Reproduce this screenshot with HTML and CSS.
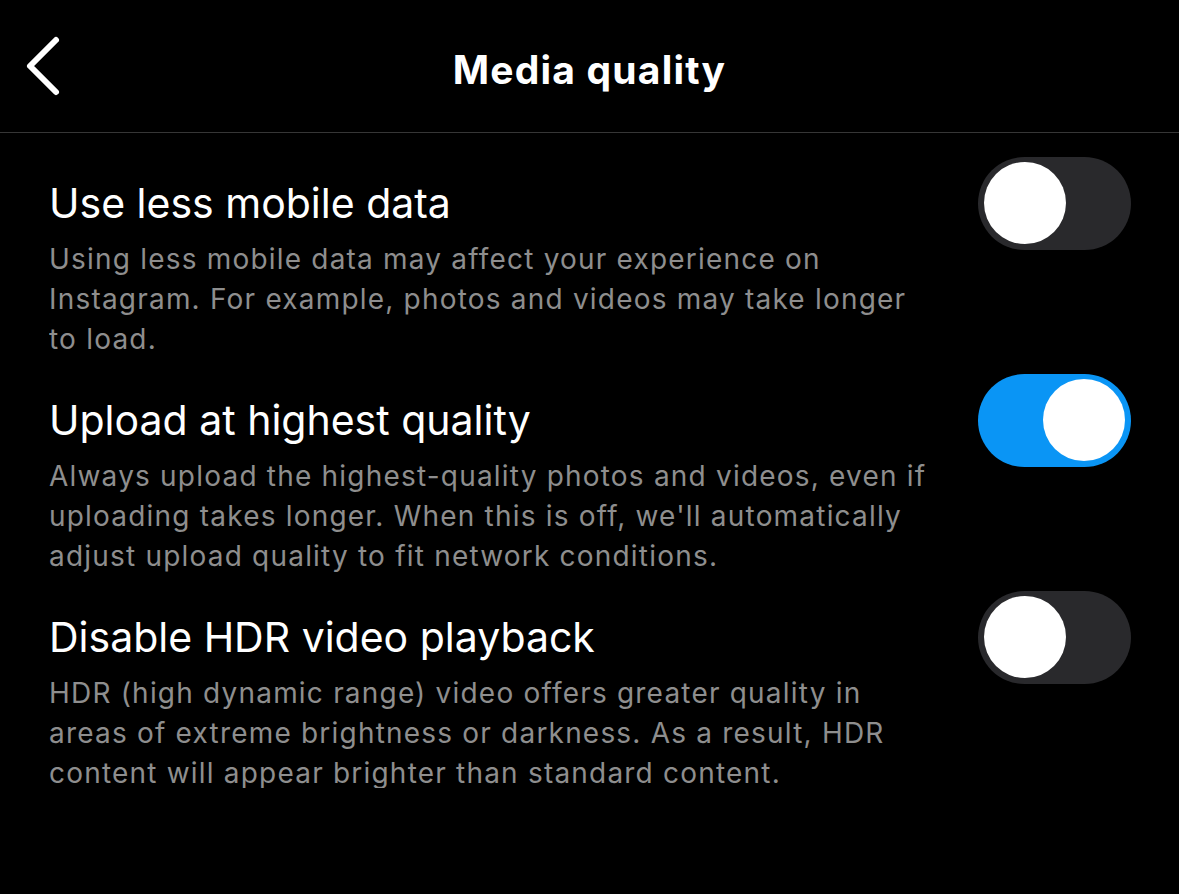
FILE: index.html
```html
<!DOCTYPE html>
<html lang="en">
<head>
<meta charset="utf-8">
<title>Media quality</title>
<link rel="stylesheet" href="styles.css">
</head>
<body>
<div class="screen">
  <header class="topbar">
    <button class="back" aria-label="Back">
      <svg width="40" height="64" viewBox="0 0 40 64"><polyline points="31,6 5,32 31,58" fill="none" stroke="#fff" stroke-width="6" stroke-linecap="round" stroke-linejoin="round"/></svg>
    </button>
    <h1 class="title">Media quality</h1>
    <span class="spacer"></span>
  </header>
  <main class="list">
    <section class="row">
      <div class="row-head">
        <h2 class="row-title">Use less mobile data</h2>
        <span class="toggle"><span class="knob"></span></span>
      </div>
      <p class="desc desc-clip1">Using less mobile data may affect your experience on Instagram. For example, photos and videos may take longer to load.</p>
    </section>
    <section class="row">
      <div class="row-head">
        <h2 class="row-title">Upload at highest quality</h2>
        <span class="toggle on"><span class="knob"></span></span>
      </div>
      <p class="desc">Always upload the highest-quality photos and videos, even if uploading takes longer. When this is off, we'll automatically adjust upload quality to fit network conditions.</p>
    </section>
    <section class="row">
      <div class="row-head">
        <h2 class="row-title">Disable HDR video playback</h2>
        <span class="toggle"><span class="knob"></span></span>
      </div>
      <p class="desc desc-clip3">HDR (high dynamic range) video offers greater quality in areas of extreme brightness or darkness. As a result, HDR content will appear brighter than standard content.</p>
    </section>
  </main>
</div>
</body>
</html>
```
FILE: styles.css
```css
html, body {
  margin: 0;
  padding: 0;
  background: #000;
}
body {
  font-family: Inter, "Noto Sans", sans-serif;
  color: #fff;
}
.screen {
  width: 1179px;
  height: 894px;
  overflow: hidden;
}
.topbar {
  height: 132px;
  border-bottom: 1px solid #363636;
  display: grid;
  grid-template-columns: 100px 1fr 100px;
  align-items: center;
}
.back {
  background: none;
  border: 0;
  padding: 0 0 0 25px;
  margin: 0;
  display: flex;
  align-items: center;
  height: 64px;
  cursor: pointer;
}
.title {
  margin: 6px 0 0;
  text-align: center;
  font-size: 39px;
  font-weight: 700;
  letter-spacing: 1.2px;
}
.list {
  padding: 40px 48px 0 49px;
}
.row {
  height: 217px;
}
.row-head {
  display: flex;
  align-items: center;
  justify-content: space-between;
  height: 60px;
}
.row-title {
  margin: 0;
  font-size: 41px;
  font-weight: 400;
  line-height: 60px;
}
.toggle {
  width: 153px;
  height: 93px;
  border-radius: 47px;
  background: #29292c;
  display: flex;
  align-items: center;
  padding: 0 6px;
  box-sizing: border-box;
  flex: none;
}
.toggle .knob {
  width: 82px;
  height: 82px;
  border-radius: 50%;
  background: #fff;
}
.toggle.on {
  background: #0a95f5;
  justify-content: flex-end;
}
.desc {
  margin: 6px 0 0;
  width: 884px;
  font-size: 28px;
  line-height: 40px;
  color: #8e8e8e;
  letter-spacing: 1.2px;
}
.desc-clip1 {
  height: 111px;
  overflow: hidden;
}
.desc-clip3 {
  height: 115px;
  overflow: hidden;
}
```
